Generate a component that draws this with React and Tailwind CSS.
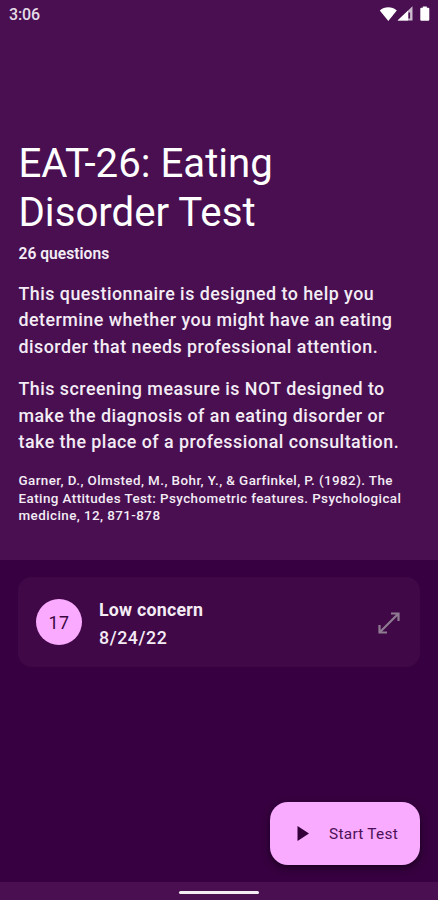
const results = [{ score: 17, label: "Low concern", date: "8/24/22" }];

function StatusBar() {
  return (
    <div className="flex h-7 items-center justify-between pl-[9px] pr-[7px]">
      <span className="pt-px text-[16px] font-medium leading-7 tracking-[-0.1px] text-[#e6dce8]">3:06</span>
      <svg width="52" height="18" viewBox="0 0 52 18" fill="#fff">
        <path d="M.8 5.4C5.5 1.3 13 1.3 17.8 5.4L9.3 15.9z" />
        <path d="M33.5 1.3v14.2H18.6z" opacity=".72" />
        <path d="M29 5.8v9.7H18.6z" />
        <path d="M29.4 7.5h1.7v6h-1.7z" fill="#490f51" />
        <path d="M43.8 1.5h4v1.3h1.5q1 0 1 1v11q0 1-1 1h-7q-1 0-1-1v-11q0-1 1-1h1.5z" />
      </svg>
    </div>
  );
}

function ResultCard({ score, label, date }) {
  return (
    <div className="flex h-[90px] items-center rounded-[14px] bg-[#400846] px-[18px]">
      <div className="flex h-[46px] w-[46px] items-center justify-center rounded-full bg-[#fbabff] pt-[3px] text-[17.8px] tracking-[0.56px] text-[#3b0642]">
        {score}
      </div>
      <div className="ml-[17px] flex-1 pt-[3px] text-[17.8px] text-[#f4ecf5]">
        <div className="font-bold leading-7 tracking-[0.22px]">{label}</div>
        <div className="font-medium leading-7 tracking-[0.56px]">{date}</div>
      </div>
      <svg className="mr-[2px] mt-[2px]" width="22" height="22" viewBox="0 0 22 22" fill="none" stroke="#8e7b92" strokeWidth="2.2">
        <path d="M1.5 20.5 20.5 1.5M13 1.5h7.5v7.5M1.5 13v7.5h7.5" />
      </svg>
    </div>
  );
}

export default function App() {
  return (
    <div className="flex h-[900px] w-[438px] flex-col overflow-hidden bg-[#370040] font-[Roboto,sans-serif]">
      <header className="h-[560px] bg-[#490f51]">
        <StatusBar />
        <div className="pl-[18.5px] pt-[111px] text-[#f4ecf5]">
          <h1 className="text-[40.2px] leading-[49px] text-white">
            EAT-26: Eating
            <br />
            Disorder Test
          </h1>
          <p className="mt-[5.5px] text-[15.6px] font-semibold leading-[22px] tracking-[0.02px]">26 questions</p>
          <div className="mt-4 space-y-[15px] text-[17.85px] font-medium leading-[26.8px] tracking-[0.48px]">
            <p>
              This questionnaire is designed to help you
              <br />
              determine whether you might have an eating
              <br />
              disorder that needs professional attention.
            </p>
            <p>
              This screening measure is NOT designed to
              <br />
              make the diagnosis of an eating disorder or
              <br />
              take the place of a professional consultation.
            </p>
          </div>
          <p className="mt-[15.5px] text-[13.4px] font-medium leading-[17.8px] tracking-[0.43px]">
            Garner, D., Olmsted, M., Bohr, Y., &amp; Garfinkel, P. (1982). The
            <br />
            Eating Attitudes Test: Psychometric features. Psychological
            <br />
            medicine, 12, 871-878
          </p>
        </div>
      </header>

      <main className="flex flex-1 flex-col justify-between px-[18px] pb-[17px] pt-[17px]">
        {results.map((r) => (
          <ResultCard key={r.date} {...r} />
        ))}
        <button className="flex h-[63px] w-[150px] items-center self-end rounded-[18px] bg-[#f9abff] pl-[27px] text-[15.4px] tracking-[0.28px] text-[#4c1056] shadow-[0_3px_7px_rgba(0,0,0,0.5)]">
          <svg width="12" height="15" viewBox="0 0 12 15" fill="#330039">
            <path d="M.5 0v15l11.5-7.5z" />
          </svg>
          <span className="ml-5 pt-[2px] font-[450]">Start Test</span>
        </button>
      </main>

      <footer className="flex h-[18px] items-center justify-center bg-[#490f51]">
        <div className="mt-[2px] h-[3px] w-20 rounded-full bg-[#f4edf4]" />
      </footer>
    </div>
  );
}
